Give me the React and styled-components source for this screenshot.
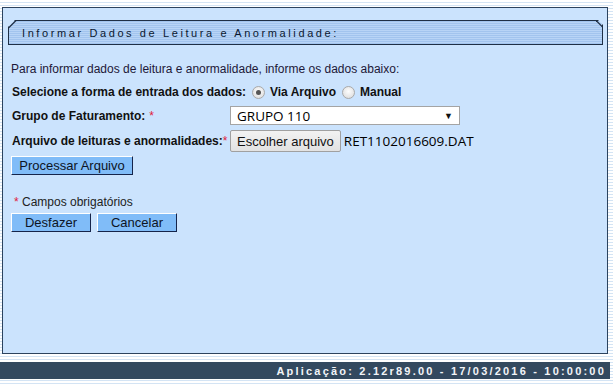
import React from 'react';
import styled, { createGlobalStyle } from 'styled-components';

const GlobalStyle = createGlobalStyle`
  html, body {
    margin: 0;
    padding: 0;
  }
  body {
    background: repeating-linear-gradient(to bottom, #ffffff 0px, #ffffff 2px, #d4e4f4 2px, #d4e4f4 3px);
    font-family: "Liberation Sans", Arial, sans-serif;
    width: 613px;
    height: 384px;
    overflow: hidden;
  }
`;

const Page = styled.div`
  padding: 7px 3px 0 0;
`;

const Panel = styled.div`
  background: #cbe3fd;
  border: 1px solid #2c435e;
  height: 347px;
  margin: 0 2px 0 2px;
  box-sizing: border-box;
  padding: 12px 4px 0 5px;
`;

const TitleBar = styled.div`
  position: relative;
  height: 25px;
  box-sizing: border-box;
  border: 1px solid #1f2f45;
  background: repeating-linear-gradient(to bottom, #a2c4ee 0px, #a2c4ee 1px, #b8d4f6 1px, #b8d4f6 2px);
  clip-path: polygon(7px 0, calc(100% - 5px) 0, 100% 5px, 100% 100%, 0 100%, 0 7px);
  display: flex;
  align-items: center;
  padding-left: 13px;
  font-size: 11px;
  letter-spacing: 2.6px;
  color: #0b1830;
`;

const Corner = styled.svg`
  position: absolute;
  top: -1px;
  left: -1px;
`;

const CornerRight = styled.svg`
  position: absolute;
  top: -1px;
  right: -1px;
`;

const Body = styled.div`
  padding: 17px 0 0 3px;
  font-size: 12px;
  color: #1d1838;
`;

const Intro = styled.div`
  line-height: 14px;
  margin-bottom: 7px;
`;

const FormGrid = styled.div`
  display: grid;
  grid-template-columns: 219px auto;
  row-gap: 5px;
  align-items: center;
`;

const Label = styled.div`
  font-weight: bold;
  color: #111;
  padding-left: 1px;
  white-space: nowrap;
`;

const Star = styled.span`
  color: #e0203a;
  font-weight: normal;
  margin-left: ${p => p.$gap ?? 4}px;
`;

const RadioRow = styled.div`
  display: flex;
  align-items: center;
  font-weight: bold;
  color: #111;
  height: 18px;
  padding-left: 12px;
`;

const Radio = styled.span`
  width: 11px;
  height: 11px;
  border-radius: 50%;
  border: 1px solid #a9a9a9;
  background: radial-gradient(circle at 50% 40%, #fdfdfd, #d8d8d8);
  margin: 0 5px 0 10px;
  display: inline-flex;
  align-items: center;
  justify-content: center;
  &::after {
    content: '';
    width: 5px;
    height: 5px;
    border-radius: 50%;
    background: ${p => (p.$checked ? '#555' : 'transparent')};
  }
`;

const SecondRadio = styled(Radio)`
  margin-left: 6px;
`;

const Select = styled.div`
  width: 230px;
  height: 19px;
  box-sizing: border-box;
  border: 1px solid #a4a4a4;
  background: #fff;
  display: flex;
  align-items: center;
  justify-content: space-between;
  padding: 0 6px 0 6px;
  font-family: "Open Sans", sans-serif;
  font-size: 13.5px;
  color: #000;
`;

const Arrow = styled.span`
  font-size: 9px;
  color: #111;
`;

const FileRow = styled.div`
  display: flex;
  align-items: center;
  gap: 3px;
`;

const FileButton = styled.button`
  height: 22px;
  padding: 0 6px;
  border: 1px solid #a0a0a0;
  border-radius: 2px;
  background: linear-gradient(#f2f2f2, #e2e2e2);
  font-family: "Liberation Sans", Arial, sans-serif;
  font-size: 13px;
  color: #111;
`;

const FileName = styled.span`
  font-family: "Open Sans", sans-serif;
  font-size: 13.5px;
  color: #000;
`;

const BlueButton = styled.button`
  height: 19px;
  width: ${p => p.$w}px;
  box-sizing: border-box;
  padding: 0;
  background: #80bcf8;
  border: 1px solid;
  border-color: #ffffff #15244a #15244a #ffffff;
  font-family: "Liberation Sans", Arial, sans-serif;
  font-size: 13px;
  color: #0d1424;
`;

const ProcessRow = styled.div`
  margin-top: 4px;
`;

const Required = styled.div`
  margin-top: 20px;
  padding-left: 3px;
  color: #222;
`;

const Actions = styled.div`
  display: flex;
  gap: 6px;
  margin-top: 4px;
`;

const Footer = styled.div`
  margin-top: 8px;
  height: 17px;
  background: #33495f;
  color: #f2f4f8;
  font-size: 11px;
  font-weight: bold;
  letter-spacing: 2.2px;
  display: flex;
  align-items: center;
  justify-content: flex-end;
  padding-right: 4px;
`;

export default function App() {
  return (
    <>
      <GlobalStyle />
      <Page>
        <Panel>
          <TitleBar>
            <Corner width="9" height="9" viewBox="0 0 9 9">
              <line x1="0.5" y1="8" x2="8" y2="0.5" stroke="#1f2f45" strokeWidth="1.2" />
            </Corner>
            <CornerRight width="7" height="7" viewBox="0 0 7 7">
              <line x1="0" y1="0.5" x2="6.5" y2="7" stroke="#1f2f45" strokeWidth="1.2" />
            </CornerRight>
            Informar Dados de Leitura e Anormalidade:
          </TitleBar>
          <Body>
            <Intro>Para informar dados de leitura e anormalidade, informe os dados abaixo:</Intro>
            <FormGrid>
              <Label>Selecione a forma de entrada dos dados:</Label>
              <RadioRow>
                <Radio $checked />
                Via Arquivo
                <SecondRadio />
                Manual
              </RadioRow>
              <Label>
                Grupo de Faturamento:<Star>*</Star>
              </Label>
              <Select>
                GRUPO 110
                <Arrow>▼</Arrow>
              </Select>
              <Label>
                Arquivo de leituras e anormalidades:<Star $gap={0}>*</Star>
              </Label>
              <FileRow>
                <FileButton>Escolher arquivo</FileButton>
                <FileName>RET1102016609.DAT</FileName>
              </FileRow>
            </FormGrid>
            <ProcessRow>
              <BlueButton $w={122}>Processar Arquivo</BlueButton>
            </ProcessRow>
            <Required>
              <Star $gap={0}>*</Star> Campos obrigatórios
            </Required>
            <Actions>
              <BlueButton $w={80}>Desfazer</BlueButton>
              <BlueButton $w={80}>Cancelar</BlueButton>
            </Actions>
          </Body>
        </Panel>
        <Footer>Aplicação: 2.12r89.00 - 17/03/2016 - 10:00:00</Footer>
      </Page>
    </>
  );
}
